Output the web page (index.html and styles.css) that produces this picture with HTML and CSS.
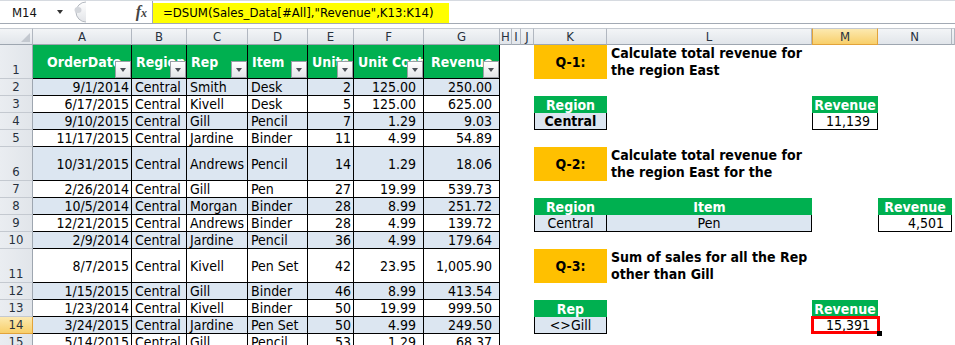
FILE: index.html
```html
<!DOCTYPE html>
<html>
<head>
<meta charset="utf-8">
<title>DSUM</title>
<link rel="stylesheet" href="styles.css">
</head>
<body>
<div class="app">
  <div class="fbar">
    <div class="namebox"><span>M14</span><span class="nb-arrow"></span></div>
    <svg class="grip" width="18" height="22" viewBox="0 0 18 22">
      <defs>
        <linearGradient id="gg" x1="0" y1="0" x2="0" y2="1">
          <stop offset="0" stop-color="#FFFFFF"/>
          <stop offset="1" stop-color="#E2E4E8"/>
        </linearGradient>
      </defs>
      <path d="M18 1 A10 10 0 0 0 18 21" fill="url(#gg)" stroke="#B4B9C0" stroke-width="1"/>
      <ellipse cx="10" cy="9" rx="3.5" ry="3" fill="#D3D6DB"/>
    </svg>
    <div class="fxwrap"><span class="fx">f<span class="fxx">x</span></span></div>
    <div class="formula"><span class="fhl">=DSUM(Sales_Data[#All],"Revenue",K13:K14)</span></div>
  </div>
  <div class="gap"></div>
  <div class="colhdr">
    <div class="ch corner">
      <svg width="12" height="10" viewBox="0 0 12 10"><polygon points="11,0 11,9 2,9" fill="#C3C8CF"/></svg>
    </div>
    <div class="ch">A</div>
    <div class="ch">B</div>
    <div class="ch">C</div>
    <div class="ch">D</div>
    <div class="ch">E</div>
    <div class="ch">F</div>
    <div class="ch">G</div>
    <div class="ch">H</div>
    <div class="ch">I</div>
    <div class="ch">J</div>
    <div class="ch">K</div>
    <div class="ch">L</div>
    <div class="ch sel">M</div>
    <div class="ch">N</div>
    <div class="ch"></div>
  </div>
  <div class="sheet">
    <div class="left">
      <div class="row">
        <div class="rh">1</div>
        <div class="c h pa">OrderDate<i class="fb"></i></div>
        <div class="c h">Region<i class="fb"></i></div>
        <div class="c h">Rep<i class="fb"></i></div>
        <div class="c h">Item<i class="fb"></i></div>
        <div class="c h">Units<i class="fb"></i></div>
        <div class="c h">Unit Cost<i class="fb"></i></div>
        <div class="c h pg">Revenue<i class="fb"></i></div>
      </div>
      <div class="row alt">
        <div class="rh">2</div><div class="c num">9/1/2014</div><div class="c">Central</div><div class="c">Smith</div><div class="c">Desk</div><div class="c num">2</div><div class="c num pr">125.00</div><div class="c num pr">250.00</div>
      </div>
      <div class="row">
        <div class="rh">3</div><div class="c num">6/17/2015</div><div class="c">Central</div><div class="c">Kivell</div><div class="c">Desk</div><div class="c num">5</div><div class="c num pr">125.00</div><div class="c num pr">625.00</div>
      </div>
      <div class="row alt">
        <div class="rh">4</div><div class="c num">9/10/2015</div><div class="c">Central</div><div class="c">Gill</div><div class="c">Pencil</div><div class="c num">7</div><div class="c num pr">1.29</div><div class="c num pr">9.03</div>
      </div>
      <div class="row">
        <div class="rh">5</div><div class="c num">11/17/2015</div><div class="c">Central</div><div class="c">Jardine</div><div class="c">Binder</div><div class="c num">11</div><div class="c num pr">4.99</div><div class="c num pr">54.89</div>
      </div>
      <div class="row alt">
        <div class="rh">6</div><div class="c num">10/31/2015</div><div class="c">Central</div><div class="c">Andrews</div><div class="c">Pencil</div><div class="c num">14</div><div class="c num pr">1.29</div><div class="c num pr">18.06</div>
      </div>
      <div class="row">
        <div class="rh">7</div><div class="c num">2/26/2014</div><div class="c">Central</div><div class="c">Gill</div><div class="c">Pen</div><div class="c num">27</div><div class="c num pr">19.99</div><div class="c num pr">539.73</div>
      </div>
      <div class="row alt">
        <div class="rh">8</div><div class="c num">10/5/2014</div><div class="c">Central</div><div class="c">Morgan</div><div class="c">Binder</div><div class="c num">28</div><div class="c num pr">8.99</div><div class="c num pr">251.72</div>
      </div>
      <div class="row">
        <div class="rh">9</div><div class="c num">12/21/2015</div><div class="c">Central</div><div class="c">Andrews</div><div class="c">Binder</div><div class="c num">28</div><div class="c num pr">4.99</div><div class="c num pr">139.72</div>
      </div>
      <div class="row alt">
        <div class="rh">10</div><div class="c num">2/9/2014</div><div class="c">Central</div><div class="c">Jardine</div><div class="c">Pencil</div><div class="c num">36</div><div class="c num pr">4.99</div><div class="c num pr">179.64</div>
      </div>
      <div class="row">
        <div class="rh">11</div><div class="c num">8/7/2015</div><div class="c">Central</div><div class="c">Kivell</div><div class="c">Pen Set</div><div class="c num">42</div><div class="c num pr">23.95</div><div class="c num pr">1,005.90</div>
      </div>
      <div class="row alt">
        <div class="rh">12</div><div class="c num">1/15/2015</div><div class="c">Central</div><div class="c">Gill</div><div class="c">Binder</div><div class="c num">46</div><div class="c num pr">8.99</div><div class="c num pr">413.54</div>
      </div>
      <div class="row">
        <div class="rh">13</div><div class="c num">1/23/2014</div><div class="c">Central</div><div class="c">Kivell</div><div class="c">Binder</div><div class="c num">50</div><div class="c num pr">19.99</div><div class="c num pr">999.50</div>
      </div>
      <div class="row alt">
        <div class="rh sel">14</div><div class="c num">3/24/2015</div><div class="c">Central</div><div class="c">Jardine</div><div class="c">Pen Set</div><div class="c num">50</div><div class="c num pr">4.99</div><div class="c num pr">249.50</div>
      </div>
      <div class="row">
        <div class="rh">15</div><div class="c num">5/14/2015</div><div class="c">Central</div><div class="c">Gill</div><div class="c">Pencil</div><div class="c num">53</div><div class="c num pr">1.29</div><div class="c num pr">68.37</div>
      </div>
    </div>
    <div class="right">
      <div class="q k y1">Q-1:</div>
      <div class="qt l y1">Calculate total revenue for<br>the region East</div>
      <div class="gh k y3">Region</div>
      <div class="gh m y3">Revenue</div>
      <div class="bx k y4 blue ctr bold">Central</div>
      <div class="bx m y4 val">11,139</div>

      <div class="q k y6">Q-2:</div>
      <div class="qt l y6">Calculate total revenue for<br>the region East for the</div>
      <div class="gh k y8">Region</div>
      <div class="gh l y8">Item</div>
      <div class="gh n y8">Revenue</div>
      <div class="bx k y9 blue ctr">Central</div>
      <div class="bx nl l y9 blue ctr">Pen</div>
      <div class="bx n y9 val">4,501</div>

      <div class="q k y11">Q-3:</div>
      <div class="qt l y11">Sum of sales for all the Rep<br>other than Gill</div>
      <div class="gh k y13">Rep</div>
      <div class="gh m y13">Revenue</div>
      <div class="bx k y14 blue ctr">&lt;&gt;Gill</div>
      <div class="bx m y14 val act">15,391<span class="handle"></span></div>
    </div>
  </div>
</div>
</body>
</html>
```

FILE: styles.css
```css
* { box-sizing: border-box; }
body {
  margin: 0;
  background: #ffffff;
  font-family: "DejaVu Sans Condensed", "Noto Sans", sans-serif;
  color: #000;
}
.app {
  width: 955px;
  height: 345px;
  overflow: hidden;
  background: #fff;
}

/* formula bar */
.fbar {
  display: flex;
  height: 24px;
  border-top: 1px solid #D6DAE0;
  border-bottom: 1px solid #A3AAB4;
  background: #fff;
}
.namebox {
  width: 68px;
  display: flex;
  align-items: center;
  justify-content: space-between;
  padding: 0 5px 0 12px;
  font-size: 13px;
  color: #111;
}
.nb-arrow {
  width: 0;
  height: 0;
  border-left: 3.5px solid transparent;
  border-right: 3.5px solid transparent;
  border-top: 4px solid #333;
}
.grip { display: block; width: 18px; height: 22px; }
.fxwrap {
  width: 66px;
  display: flex;
  align-items: center;
  justify-content: flex-end;
  padding-right: 5px;
}
.fx {
  font-family: "Liberation Serif", serif;
  font-style: italic;
  font-weight: bold;
  font-size: 16px;
  color: #444;
}
.fxx { font-size: 12px; }
.formula { flex: 1; border-left: 1px solid #A3AAB4; }
.fhl {
  display: block;
  width: 296px;
  height: 20px;
  margin-top: 2px;
  background: #FFFF00;
  padding-left: 10px;
  font-size: 13px;
  line-height: 20px;
  white-space: nowrap;
}
.gap { height: 4px; }

/* column headers */
.colhdr {
  display: grid;
  grid-template-columns: 33px 99px 55px 61px 60px 46px 70px 76px 12px 9px 13px 73px 205px 66px 74px 3px;
  height: 17px;
}
.ch {
  background: linear-gradient(#F3F5F7, #E1E5EA);
  border-top: 1px solid #C4C9D0;
  border-right: 1px solid #B1B7C0;
  border-bottom: 1px solid #9EA6B0;
  display: flex;
  align-items: center;
  justify-content: center;
  font-size: 13px;
  color: #27313d;
  overflow: hidden;
}
.ch.sel {
  background: linear-gradient(#FCE9B0, #F8CF6A);
  border-right-color: #E2A33A;
  border-bottom-color: #E2A33A;
  border-left: 1px solid #E2A33A;
}
.corner { justify-content: flex-end; align-items: flex-end; padding: 0 1px 1px 0; }
.corner svg { display: block; }

/* sheet body */
.sheet { display: flex; }
.left {
  display: grid;
  grid-template-columns: 33px 99px 55px 61px 60px 46px 70px 76px;
  grid-template-rows: 34px 17px 17px 17px 17px 34px 17px 17px 17px 17px 34px 17px 17px 17px 17px;
}
.row { display: contents; }
.rh {
  background: linear-gradient(90deg, #EAEDF1, #E1E5EA);
  border-right: 1px solid #9EA6B0;
  border-bottom: 1px solid #C4C9D0;
  display: flex;
  align-items: flex-end;
  justify-content: center;
  font-size: 13px;
  line-height: 16px;
  color: #27313d;
}
.rh.sel {
  background: linear-gradient(#FCE9B0, #F8CF6A);
  border-bottom-color: #E2A33A;
  border-right-color: #E2A33A;
}
.c {
  border-right: 1px solid #000;
  border-bottom: 1px solid #000;
  display: flex;
  align-items: center;
  padding: 0 2px 0 3px;
  font-size: 14px;
  white-space: nowrap;
  overflow: hidden;
  background: #fff;
}
.alt .c { background: #DCE6F1; }
.num { justify-content: flex-end; }
.pr { padding-right: 7px; }
.h {
  position: relative;
  background: #00B050;
  color: #fff;
  font-weight: bold;
  padding-left: 4px;
}
.pa { padding-left: 14px; }
.pg { padding-left: 7px; }
.fb {
  position: absolute;
  right: 0;
  bottom: 0;
  width: 16px;
  height: 17px;
  border: 1px solid #9A9FA6;
  background: linear-gradient(#FFFFFF, #E3E5E8);
}
.fb::after {
  content: "";
  position: absolute;
  left: 4px;
  top: 6px;
  border-left: 3.5px solid transparent;
  border-right: 3.5px solid transparent;
  border-top: 4px solid #4A4F56;
}

/* right area */
.right {
  display: grid;
  grid-template-columns: 12px 9px 13px 73px 205px 66px 74px 3px;
  grid-template-rows: 34px 17px 17px 17px 17px 34px 17px 17px 17px 17px 34px 17px 17px 17px 17px;
}
.k { grid-column: 4; }
.l { grid-column: 5; }
.m { grid-column: 6; }
.n { grid-column: 7; }
.y1 { grid-row: 1; }
.y3 { grid-row: 3; }
.y4 { grid-row: 4; }
.y6 { grid-row: 6; }
.y8 { grid-row: 8; }
.y9 { grid-row: 9; }
.y11 { grid-row: 11; }
.y13 { grid-row: 13; }
.y14 { grid-row: 14; }

.q {
  background: #FFC000;
  font-weight: bold;
  font-size: 14px;
  display: flex;
  align-items: center;
  justify-content: center;
}
.qt {
  font-weight: bold;
  font-size: 14px;
  line-height: 17px;
  padding-left: 4px;
  white-space: nowrap;
}
.gh {
  background: #00B050;
  color: #fff;
  font-weight: bold;
  font-size: 14px;
  display: flex;
  align-items: center;
  justify-content: center;
  white-space: nowrap;
  overflow: hidden;
}
.bx {
  border: 1px solid #000;
  border-top: 0;
  display: flex;
  align-items: center;
  font-size: 14px;
  white-space: nowrap;
  background: #fff;
}
.bx.nl { border-left: 0; }
.blue { background: #DCE6F1; }
.ctr { justify-content: center; }
.bold { font-weight: bold; }
.val { justify-content: flex-end; padding-right: 7px; }
.act { position: relative; }
.act::after {
  content: "";
  position: absolute;
  left: -2px;
  right: -3px;
  top: -1px;
  bottom: -1px;
  border: 3px solid #FF0000;
}
.handle {
  position: absolute;
  right: -5px;
  bottom: -3px;
  width: 5px;
  height: 5px;
  background: #000;
  z-index: 2;
}
```
